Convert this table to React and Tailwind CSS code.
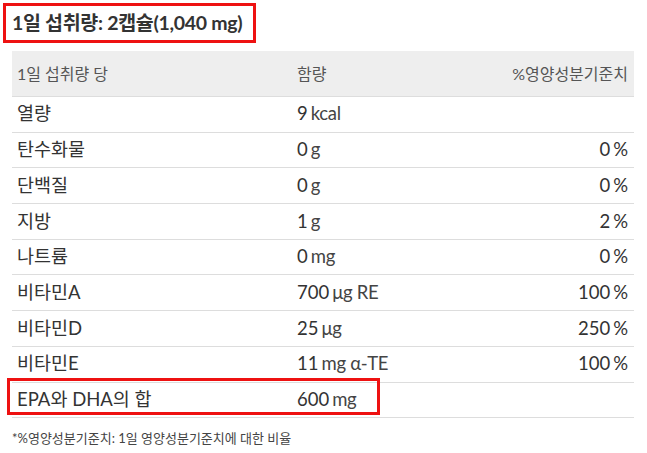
import React from 'react';

const rows = [
  { name: '열량', amount: '9', unit: 'kcal', pct: '' },
  { name: '탄수화물', amount: '0', unit: 'g', pct: '0' },
  { name: '단백질', amount: '0', unit: 'g', pct: '0' },
  { name: '지방', amount: '1', unit: 'g', pct: '2' },
  { name: '나트륨', amount: '0', unit: 'mg', pct: '0' },
  { name: '비타민A', amount: '700', unit: 'μg RE', pct: '100' },
  { name: '비타민D', amount: '25', unit: 'μg', pct: '250' },
  { name: '비타민E', amount: '11', unit: 'mg α-TE', pct: '100' },
  { name: 'EPA와 DHA의 합', amount: '600', unit: 'mg', pct: '', mark: true },
];

const font = { fontFamily: "Lato, 'Noto Sans CJK KR', 'Noto Sans', sans-serif" };

export default function App() {
  return (
    <div className="w-[647px] h-[453px] bg-white text-[#333]" style={font}>
      <div className="pt-[3px] pl-[3px]">
        <div className="w-[253px] h-[40px] border-[3px] border-[#ee1111] flex items-center pl-[6px]">
          <h2 className="text-[19.5px] font-bold tracking-[-0.3px] text-[#333]">1일 섭취량: 2캡슐(1,040 mg)</h2>
        </div>
      </div>

      <div className="ml-[12px] w-[622px] mt-[8px]">
        <div className="h-[46px] bg-[#eeeeee] border-b border-[#dddddd] flex items-center text-[16px] text-[#555]">
          <div className="w-[280px] pl-[5px]">1일 섭취량 당</div>
          <div className="w-[180px] pl-[5px]">함량</div>
          <div className="flex-1 text-right pr-[6px]">%영양성분기준치</div>
        </div>
        {rows.map((r) => (
          <div key={r.name} className="relative h-[35.7px] border-b border-[#dddddd] flex items-center text-[18.5px]">
            <div className="w-[280px] pl-[5px]">{r.name}</div>
            <div className="w-[180px] pl-[5px] flex items-baseline gap-[3px]">
              <span>{r.amount}</span>
              <span className="text-[#444] tracking-[-0.3px]">{r.unit}</span>
            </div>
            <div className="flex-1 text-right pr-[6px]">
              {r.pct !== '' && (
                <span>
                  {r.pct}<span className="ml-[3px]">%</span>
                </span>
              )}
            </div>
            {r.mark && (
              <div className="absolute left-[-5px] top-[-5px] w-[373px] h-[37px] border-[3px] border-[#ee1111] pointer-events-none" />
            )}
          </div>
        ))}
        <p className="mt-[11px] text-[13px] text-[#444]">*%영양성분기준치: 1일 영양성분기준치에 대한 비율</p>
      </div>
    </div>
  );
}
